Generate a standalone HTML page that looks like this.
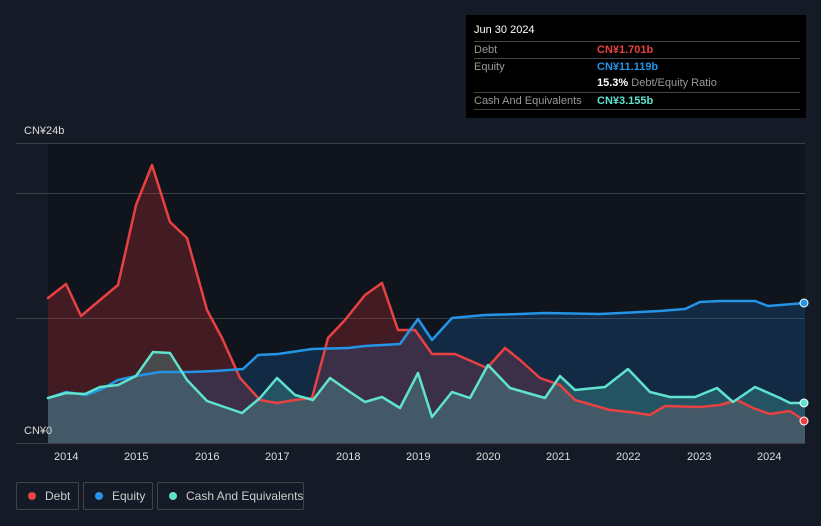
<!DOCTYPE html>
<html><head><meta charset="utf-8"><style>
html,body{margin:0;width:821px;height:526px;overflow:hidden}
body{background:#151b26;font-family:"Liberation Sans",sans-serif;position:relative}
.tt{position:absolute;left:466px;top:15px;width:340px;height:103px;background:#000;color:#fff;font-size:11px}
.tt .r{position:absolute;left:8px;width:326px;border-top:1px solid #444;height:17px;line-height:17px;color:#999}
.tt .v{position:absolute;left:123px}
.ax{position:absolute;color:#ddd;font-size:11px}
.leg{position:absolute;top:482px;height:28px;border:1px solid #444;border-radius:2px;color:#ccc;font-size:12px;line-height:26px;box-sizing:border-box;white-space:nowrap}
.leg i{display:inline-block;width:8px;height:8px;border-radius:50%;margin:0 9px 0 11px}
</style></head><body>
<svg width="821" height="526" style="position:absolute;left:0;top:0">
<rect x="48" y="143" width="757" height="300" fill="#10141d"/>
<g stroke="#3a3e46" stroke-width="1">
<line x1="16" y1="143.5" x2="805" y2="143.5"/><line x1="16" y1="193.5" x2="805" y2="193.5"/><line x1="16" y1="318.5" x2="805" y2="318.5"/><line x1="16" y1="443.5" x2="805" y2="443.5"/>
</g>
<polygon fill="rgba(200,50,55,0.28)" points="48,443 48,298 66,284 81,316 100,300 118,285 136,205 152,165 170,222 187,238 207,310 222,338 240,378 260,400 277,403 295,400 312,398 328,338 345,320 365,295 382,283 398,330 415,330 432,354 455,354 487,368 505,348 520,360 540,378 560,385 575,400 610,410 630,412 650,415 665,406 700,407 720,405 737,400 753,408 770,414 790,411 805,421 805,443"/>
<polygon fill="rgba(30,130,220,0.2)" points="48,443 48,398 66,392 86,395 100,390 118,380 136,376 160,372 190,372 215,371 243,369 258,355 278,354 312,349 348,348 365,346 400,344 418,319 432,340 452,318 485,315 520,314 545,313 600,314 660,311 685,309 700,302 720,301 755,301 768,306 805,303 805,443"/>
<polygon fill="rgba(90,210,195,0.25)" points="48,443 48,398 66,393 85,394 100,387 118,385 136,376 153,352 170,353 187,380 207,401 242,413 260,398 277,378 295,395 313,400 330,378 350,392 365,402 382,397 400,408 418,373 432,417 452,392 470,398 488,365 510,388 545,398 560,376 575,390 605,387 628,369 650,392 670,397 695,397 717,388 733,402 755,387 780,398 790,403 805,403 805,443"/>
<g fill="none" stroke-width="2.5" stroke-linejoin="round" stroke-linecap="round">
<polyline stroke="#e84142" points="48,298 66,284 81,316 100,300 118,285 136,205 152,165 170,222 187,238 207,310 222,338 240,378 260,400 277,403 295,400 312,398 328,338 345,320 365,295 382,283 398,330 415,330 432,354 455,354 487,368 505,348 520,360 540,378 560,385 575,400 610,410 630,412 650,415 665,406 700,407 720,405 737,400 753,408 770,414 790,411 805,421"/>
<polyline stroke="#2394e6" points="48,398 66,392 86,395 100,390 118,380 136,376 160,372 190,372 215,371 243,369 258,355 278,354 312,349 348,348 365,346 400,344 418,319 432,340 452,318 485,315 520,314 545,313 600,314 660,311 685,309 700,302 720,301 755,301 768,306 805,303"/>
<polyline stroke="#5fe3cf" points="48,398 66,393 85,394 100,387 118,385 136,376 153,352 170,353 187,380 207,401 242,413 260,398 277,378 295,395 313,400 330,378 350,392 365,402 382,397 400,408 418,373 432,417 452,392 470,398 488,365 510,388 545,398 560,376 575,390 605,387 628,369 650,392 670,397 695,397 717,388 733,402 755,387 780,398 790,403 805,403"/>
</g>
<circle cx="804" cy="421" r="4" fill="#e84142" stroke="#fff" stroke-width="1"/>
<circle cx="804" cy="303" r="4" fill="#2394e6" stroke="#fff" stroke-width="1"/>
<circle cx="804" cy="403" r="4" fill="#5fe3cf" stroke="#fff" stroke-width="1"/>
</svg>
<div class="ax" style="left:24px;top:125px">CN¥24b</div>
<div class="ax" style="left:24px;top:425px">CN¥0</div>
<div class="ax" style="left:54px;top:451px">2014</div><div class="ax" style="left:124px;top:451px">2015</div><div class="ax" style="left:195px;top:451px">2016</div><div class="ax" style="left:265px;top:451px">2017</div><div class="ax" style="left:336px;top:451px">2018</div><div class="ax" style="left:406px;top:451px">2019</div><div class="ax" style="left:476px;top:451px">2020</div><div class="ax" style="left:546px;top:451px">2021</div><div class="ax" style="left:616px;top:451px">2022</div><div class="ax" style="left:687px;top:451px">2023</div><div class="ax" style="left:757px;top:451px">2024</div>
<div class="tt">
<div style="position:absolute;left:8px;top:9px;color:#fff;font-size:11px">Jun 30 2024</div>
<div class="r" style="top:26px">Debt<span class="v" style="color:#e84142;font-weight:bold">CN¥1.701b</span></div>
<div class="r" style="top:43px">Equity<span class="v" style="color:#2394e6;font-weight:bold">CN¥11.119b</span></div>
<div class="r" style="top:60px;border-top:none"><span class="v"><b style="color:#fff">15.3%</b> Debt/Equity Ratio</span></div>
<div class="r" style="top:77px">Cash And Equivalents<span class="v" style="color:#5fe3cf;font-weight:bold">CN¥3.155b</span></div>
<div class="r" style="top:94px;height:0"></div>
</div>
<div class="leg" style="left:16px;width:63px"><i style="background:#e84142"></i>Debt</div>
<div class="leg" style="left:83px;width:70px"><i style="background:#2394e6"></i>Equity</div>
<div class="leg" style="left:157px;width:147px"><i style="background:#5fe3cf"></i>Cash And Equivalents</div>
</body></html>
